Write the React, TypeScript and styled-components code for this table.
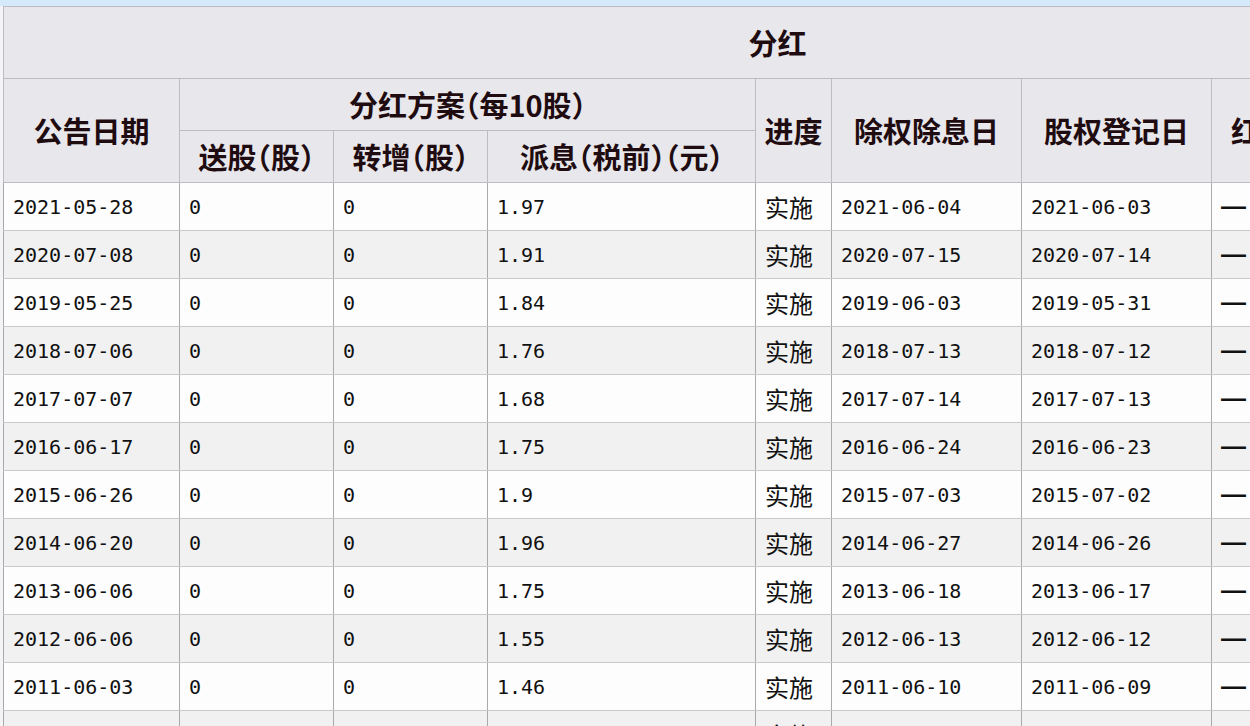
import * as React from 'react';
import styled, { createGlobalStyle } from 'styled-components';

const GlobalStyle = createGlobalStyle`
  html, body {
    margin: 0;
    padding: 0;
    background: #ffffff;
    overflow: hidden;
  }
`;

const Frame = styled.div`
  width: 1250px;
  height: 726px;
  overflow: hidden;
  background: #f4f4f6;
  border-top: 6px solid #d4e9f9;
  padding-left: 3px;
  box-sizing: border-box;
`;

const Table = styled.table`
  border-collapse: collapse;
  table-layout: fixed;
  width: 1548px;
  border-left: 1px solid #9c9c9c;
  border-top: 1px solid #b6c6d4;
`;

const Th = styled.th<{ $h: number }>`
  height: ${(p) => p.$h}px;
  padding: 0;
  background: #e8e7eb;
  border: 1px solid #bdbcc0;
  color: #1f0c10;
  font-family: 'Noto Sans CJK SC', 'Noto Sans', sans-serif;
  font-size: 29px;
  font-weight: 700;
  font-feature-settings: 'halt';
  line-height: 1.2;
  text-align: center;
  vertical-align: middle;
  white-space: nowrap;
  overflow: hidden;
`;

const Title = styled(Th)`
  font-weight: 600;
`;

const Row = styled.tr<{ $alt: boolean }>`
  background: ${(p) => (p.$alt ? '#f1f1f2' : '#fdfdfd')};
`;

const Td = styled.td`
  height: 47px;
  padding: 0 0 0 9px;
  border-left: 1px solid #a9a9ab;
  border-right: 1px solid #a9a9ab;
  border-bottom: 1px solid #c9c9cb;
  color: #111111;
  font-family: 'DejaVu Sans Mono', 'Liberation Mono', monospace;
  font-size: 20px;
  vertical-align: middle;
  white-space: nowrap;
  overflow: hidden;
`;

const CjkTd = styled(Td)`
  font-family: 'Noto Sans CJK SC', 'Noto Sans', sans-serif;
  font-size: 24px;
`;

const DashTd = styled(Td)`
  font-family: 'Liberation Sans', sans-serif;
  font-size: 25px;
  font-weight: 700;
`;

const widths = [176, 154, 154, 268, 76, 190, 190, 184, 156];

const rows = [
  ['2021-05-28', '1.97', '2021-06-04', '2021-06-03'],
  ['2020-07-08', '1.91', '2020-07-15', '2020-07-14'],
  ['2019-05-25', '1.84', '2019-06-03', '2019-05-31'],
  ['2018-07-06', '1.76', '2018-07-13', '2018-07-12'],
  ['2017-07-07', '1.68', '2017-07-14', '2017-07-13'],
  ['2016-06-17', '1.75', '2016-06-24', '2016-06-23'],
  ['2015-06-26', '1.9', '2015-07-03', '2015-07-02'],
  ['2014-06-20', '1.96', '2014-06-27', '2014-06-26'],
  ['2013-06-06', '1.75', '2013-06-18', '2013-06-17'],
  ['2012-06-06', '1.55', '2012-06-13', '2012-06-12'],
  ['2011-06-03', '1.46', '2011-06-10', '2011-06-09'],
  ['2010-05-28', '1.3', '2010-06-04', '2010-06-03'],
];

export default function App() {
  return (
    <Frame>
      <GlobalStyle />
      <Table>
        <colgroup>
          {widths.map((w, i) => (
            <col key={i} style={{ width: w }} />
          ))}
        </colgroup>
        <thead>
          <tr>
            <Title $h={71} colSpan={9}>分红</Title>
          </tr>
          <tr>
            <Th $h={51} rowSpan={2}>公告日期</Th>
            <Th $h={51} colSpan={3}>分红方案（每10股）</Th>
            <Th $h={51} rowSpan={2}>进度</Th>
            <Th $h={51} rowSpan={2}>除权除息日</Th>
            <Th $h={51} rowSpan={2}>股权登记日</Th>
            <Th $h={51} rowSpan={2}>红股上市日</Th>
            <Th $h={51} rowSpan={2}>查看详细</Th>
          </tr>
          <tr>
            <Th $h={51}>送股（股）</Th>
            <Th $h={51}>转增（股）</Th>
            <Th $h={51}>派息（税前）（元）</Th>
          </tr>
        </thead>
        <tbody>
          {rows.map((r, i) => (
            <Row key={r[0]} $alt={i % 2 === 1}>
              <Td>{r[0]}</Td>
              <Td>0</Td>
              <Td>0</Td>
              <Td>{r[1]}</Td>
              <CjkTd>实施</CjkTd>
              <Td>{r[2]}</Td>
              <Td>{r[3]}</Td>
              <DashTd>—</DashTd>
              <CjkTd>明细</CjkTd>
            </Row>
          ))}
        </tbody>
      </Table>
    </Frame>
  );
}
